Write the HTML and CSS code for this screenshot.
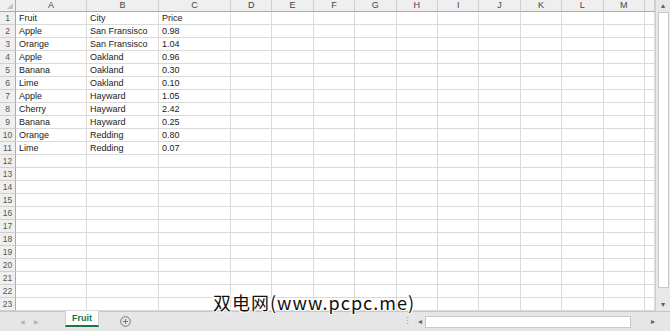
FILE: index.html
```html
<!DOCTYPE html>
<html lang="en">
<head>
    <meta charset="UTF-8">
    <title>Fruit - Sheet</title>
    <link rel="stylesheet" href="styles.css">
</head>
<body>
    <div class="app">
        <div class="main">
            <div class="sheet">
                <table class="grid" id="grid"></table>
            </div>
            <div class="vscroll">
                <div class="arrow up">&#9652;</div>
                <div class="vthumb"></div>
                <div class="vtrack"></div>
                <div class="arrow down">&#9662;</div>
            </div>
        </div>
        <div class="tabbar">
            <div class="nav">
                <span>&#9664;</span>
                <span>&#9654;</span>
            </div>
            <div class="tab">Fruit</div>
            <div class="add">
                <svg width="11" height="11" viewBox="0 0 11 11">
                    <circle cx="5.5" cy="5.5" r="4.8" fill="none" stroke="#777" stroke-width="1"/>
                    <path d="M5.5 3v5M3 5.5h5" stroke="#777" stroke-width="1"/>
                </svg>
            </div>
            <div class="spacer"></div>
            <div class="dots">&#8942;</div>
            <div class="hscroll">
                <div class="harrow">&#9666;</div>
                <div class="hthumb"></div>
                <div class="htrack"></div>
                <div class="harrow">&#9656;</div>
            </div>
        </div>
        <div class="watermark">双电网(www.pcpc.me)</div>
    </div>
    <script src="script.js"></script>
</body>
</html>
```

FILE: styles.css
```css
body {
    margin: 0;
    padding: 0;
    font-family: 'Liberation Sans', Arial, sans-serif;
    background: #ffffff;
}

.app {
    position: relative;
    width: 670px;
    height: 331px;
    display: flex;
    flex-direction: column;
    overflow: hidden;
}

.main {
    display: flex;
    height: 311px;
}

.sheet {
    width: 655px;
    overflow: hidden;
}

.grid {
    table-layout: fixed;
    border-collapse: separate;
    border-spacing: 0;
    width: 655px;
}

.grid td, .grid th {
    box-sizing: border-box;
    height: 13px;
    padding: 1px 0 0 3px;
    border-right: 1px solid #dadada;
    border-bottom: 1px solid #dadada;
    font-size: 9px;
    font-weight: normal;
    color: #222;
    white-space: nowrap;
    overflow: hidden;
    line-height: 11px;
    text-align: left;
}

.grid thead th {
    height: 12px;
    background: #efefef;
    color: #444;
    text-align: center;
    padding: 0;
    border-right: 1px solid #d0d0d0;
    border-bottom: 1px solid #ababab;
    line-height: 11px;
}

.grid .rowhead {
    background: #efefef;
    color: #555;
    text-align: center;
    padding: 1px 0 0 0;
    border-right: 1px solid #ababab;
    border-bottom: 1px solid #d0d0d0;
    font-size: 8.5px;
}

.grid thead th.corner {
    position: relative;
    border-right: 1px solid #ababab;
}

.corner::after {
    content: '';
    position: absolute;
    right: 2px;
    bottom: 2px;
    border-left: 6px solid transparent;
    border-bottom: 6px solid #c4c4c4;
}

.vscroll {
    width: 15px;
    box-sizing: border-box;
    background: #e8e8e8;
    border-left: 1px solid #cfcfcf;
    display: flex;
    flex-direction: column;
    align-items: center;
}

.arrow {
    height: 12px;
    font-size: 8px;
    line-height: 12px;
    color: #606060;
}

.vthumb {
    width: 11px;
    height: 276px;
    box-sizing: border-box;
    background: #ffffff;
    border: 1px solid #c8c8c8;
}

.vtrack {
    flex: 1;
}

.tabbar {
    height: 20px;
    display: flex;
    align-items: stretch;
    background: #e6e6e6;
    border-top: 1px solid #c6c6c6;
    box-sizing: border-box;
}

.nav {
    width: 65px;
    display: flex;
    align-items: center;
    gap: 9px;
    padding-left: 20px;
    box-sizing: border-box;
    font-size: 6px;
    color: #b4b4b4;
}

.tab {
    width: 34px;
    height: 16px;
    box-sizing: border-box;
    background: #ffffff;
    color: #217346;
    font-size: 9px;
    font-weight: bold;
    text-align: center;
    line-height: 14px;
    border-bottom: 2px solid #217346;
    border-left: 1px solid #d0d0d0;
    border-right: 1px solid #d0d0d0;
    margin-top: -1px;
}

.add {
    width: 55px;
    display: flex;
    align-items: center;
    padding-left: 21px;
    box-sizing: border-box;
}

.spacer {
    width: 249px;
}

.dots {
    width: 12px;
    font-size: 9px;
    color: #999;
    line-height: 19px;
}

.hscroll {
    width: 243px;
    display: flex;
    align-items: center;
}

.harrow {
    width: 10px;
    height: 12px;
    font-size: 8px;
    line-height: 12px;
    text-align: center;
    color: #606060;
}

.hthumb {
    width: 206px;
    height: 12px;
    box-sizing: border-box;
    background: #ffffff;
    border: 1px solid #c8c8c8;
}

.htrack {
    flex: 1;
}

.watermark {
    position: absolute;
    left: 213px;
    top: 290px;
    font-family: 'Noto Sans CJK SC', 'Liberation Sans', sans-serif;
    font-size: 18px;
    line-height: 24px;
    color: #111;
    letter-spacing: 1px;
    text-shadow: 1px 1px 0 #fff, -1px -1px 0 #fff, 1px -1px 0 #fff, -1px 1px 0 #fff;
}
```

FILE: script.js
```js
const grid = document.getElementById('grid');

const columns = ['A', 'B', 'C', 'D', 'E', 'F', 'G', 'H', 'I', 'J', 'K', 'L', 'M', ''];
const widths = [16, 71, 72, 72, 41.4, 41.4, 41.4, 41.4, 41.4, 41.4, 41.4, 41.4, 41.4, 41.4, 10];

const rows = [
    ['Fruit', 'City', 'Price'],
    ['Apple', 'San Fransisco', '0.98'],
    ['Orange', 'San Fransisco', '1.04'],
    ['Apple', 'Oakland', '0.96'],
    ['Banana', 'Oakland', '0.30'],
    ['Lime', 'Oakland', '0.10'],
    ['Apple', 'Hayward', '1.05'],
    ['Cherry', 'Hayward', '2.42'],
    ['Banana', 'Hayward', '0.25'],
    ['Orange', 'Redding', '0.80'],
    ['Lime', 'Redding', '0.07']
];

const colgroup = document.createElement('colgroup');
widths.forEach(w => {
    const col = document.createElement('col');
    col.style.width = w + 'px';
    colgroup.appendChild(col);
});
grid.appendChild(colgroup);

const thead = document.createElement('thead');
const headRow = document.createElement('tr');
const corner = document.createElement('th');
corner.className = 'corner';
headRow.appendChild(corner);
columns.forEach(name => {
    const th = document.createElement('th');
    th.textContent = name;
    headRow.appendChild(th);
});
thead.appendChild(headRow);
grid.appendChild(thead);

const tbody = document.createElement('tbody');
for (let r = 0; r < 23; r++) {
    const tr = document.createElement('tr');
    const num = document.createElement('td');
    num.className = 'rowhead';
    num.textContent = r + 1;
    tr.appendChild(num);
    const data = rows[r] || [];
    columns.forEach((_, c) => {
        const td = document.createElement('td');
        td.textContent = data[c] || '';
        tr.appendChild(td);
    });
    tbody.appendChild(tr);
}
grid.appendChild(tbody);
```
